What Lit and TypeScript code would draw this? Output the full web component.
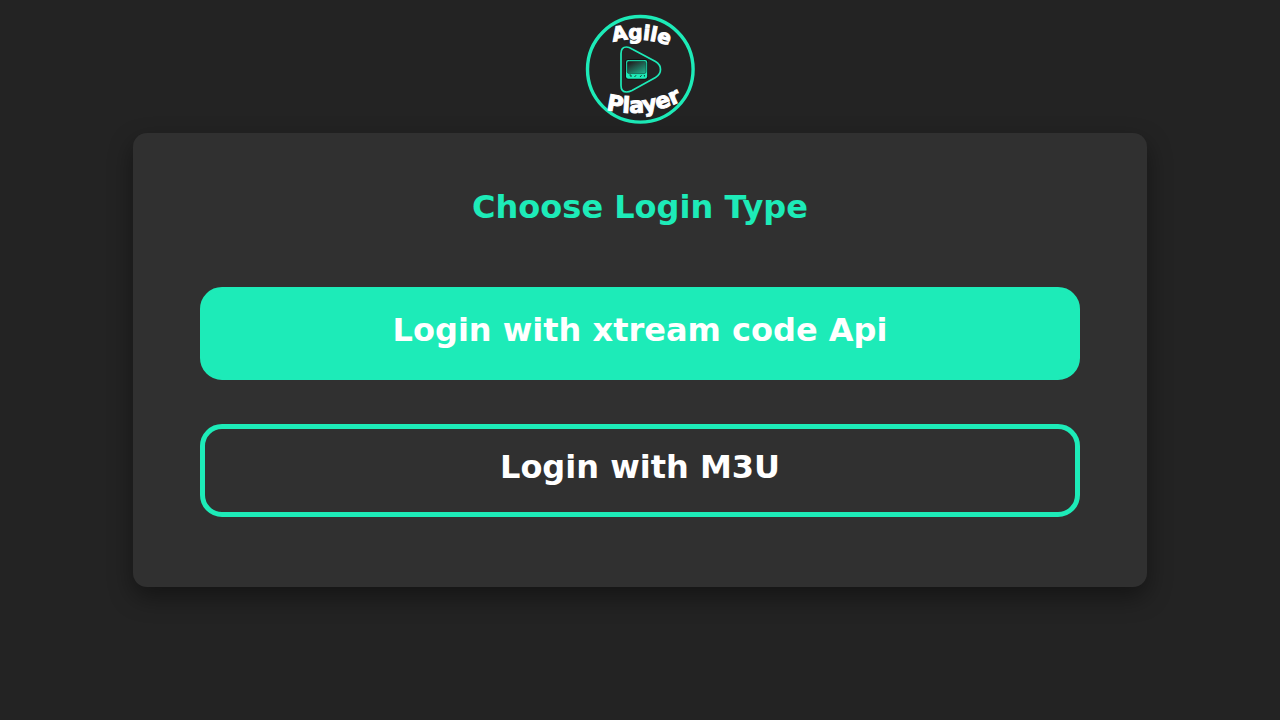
import { LitElement, html, css } from "lit";
import { customElement } from "lit/decorators.js";

@customElement("agile-logo")
class AgileLogo extends LitElement {
  static styles = css`
    :host { display: block; }
    .logo { display: block; width: 120px; height: 120px; }
    .word {
      font-family: "DejaVu Sans", Verdana, sans-serif;
      font-size: 20px;
      font-weight: 700;
      fill: #fff;
      stroke: #fff;
      stroke-width: 1px;
      text-anchor: middle;
    }
    .lower { font-size: 22px; }
  `;

  render() {
    return html`
      <svg class="logo" viewBox="0 0 120 120" role="img" aria-label="Agile Player">
        <defs>
          <path id="top" d="M27 34 Q60 23 95 38" />
          <path id="bottom" d="M15 96 Q64 114 112 85" />
          <linearGradient id="screen" x1="0.1" y1="0" x2="0.9" y2="1">
            <stop offset="0.1" stop-color="#232323" />
            <stop offset="1" stop-color="#1fb08c" />
          </linearGradient>
        </defs>
        <circle cx="60.3" cy="59.3" r="52.8" fill="none" stroke="#1debb8" stroke-width="3.4" />
        <path
          d="M41 43.5 Q41 37 46.5 37 Q49 37 52 39 L75.5 51.5 Q80.5 54.5 80.5 59.5 Q80.5 64.5 75.5 67.5 L52 80.5 Q49 82 46.5 82 Q41 82 41 75.5 Z"
          fill="none" stroke="#1debb8" stroke-width="1.7" />
        <rect x="45.2" y="49.2" width="22.8" height="20.4" rx="3" fill="#0c0c0c" />
        <rect x="46" y="50" width="21.2" height="18.8" rx="2.4" fill="#1debb8" />
        <rect x="47.2" y="51.2" width="18.8" height="12.4" rx="2" fill="url(#screen)" stroke="#163b32" stroke-width="0.6" />
        <path d="M49.5 65h1.5v2M54.5 67l1.6-1.8M60 67l1.6-1.8M64.4 65v1.6" fill="none" stroke="#1a3d34" stroke-width="1" />
        <text class="word"><textPath href="#top" startOffset="50%">Agile</textPath></text>
        <text class="word lower"><textPath href="#bottom" startOffset="50%">Player</textPath></text>
      </svg>
    `;
  }
}

@customElement("app-root")
class AppRoot extends LitElement {
  static styles = css`
    :host {
      display: flex;
      flex-direction: column;
      align-items: center;
      box-sizing: border-box;
      min-height: 100vh;
      padding: 10px 0 40px;
      background: #232323;
      font-family: "DejaVu Sans", Verdana, sans-serif;
    }
    .card {
      box-sizing: border-box;
      width: calc(100% - 266px);
      min-width: 640px;
      margin-top: 3px;
      padding: 50px 67px 70px;
      border-radius: 14px;
      background: #303030;
      box-shadow: 0 10px 24px rgba(0, 0, 0, 0.42);
      display: flex;
      flex-direction: column;
      gap: 44px;
    }
    .title {
      margin: 0 0 12px;
      color: #1debb8;
      font-size: 32px;
      font-weight: 700;
      line-height: 48px;
      text-align: center;
    }
    .choice {
      box-sizing: border-box;
      width: 100%;
      padding: 14px 20px 21px;
      border: 5px solid #1debb8;
      border-radius: 22px;
      background: transparent;
      color: #fff;
      font: inherit;
      font-size: 32px;
      font-weight: 700;
      line-height: 48px;
      cursor: pointer;
    }
    .primary { background: #1debb8; }
  `;

  render() {
    return html`
      <agile-logo></agile-logo>
      <main class="card">
        <h1 class="title">Choose Login Type</h1>
        <button class="choice primary" type="button">Login with xtream code Api</button>
        <button class="choice" type="button">Login with M3U</button>
      </main>
    `;
  }
}
